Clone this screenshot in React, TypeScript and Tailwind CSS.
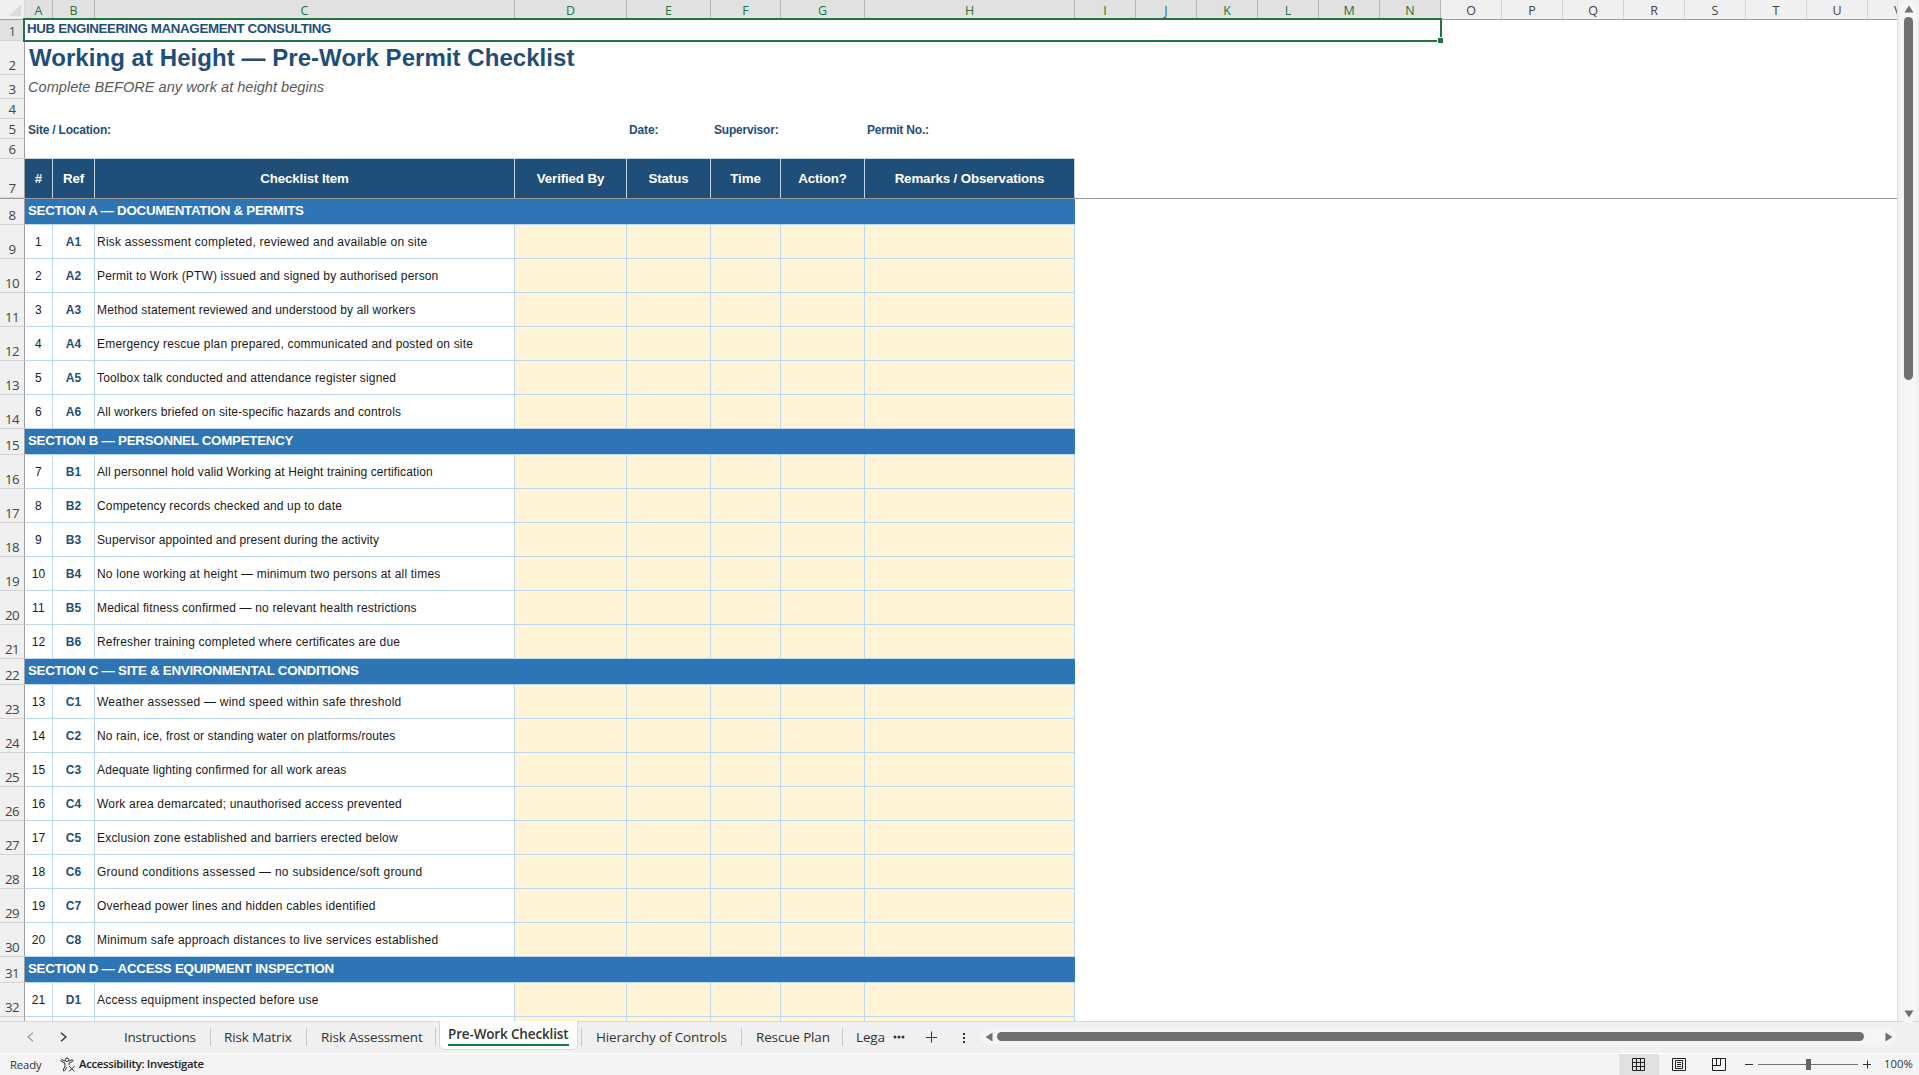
import { clsx } from 'clsx';

type Item = { row: number; n: number; ref: string; text: string; spacing: number };
type Section = { row: number; title: string; items: Item[] };

// each entry is the item text and its letter spacing in px
const makeSection = (
  row: number,
  first: number,
  letter: string,
  title: string,
  entries: [string, number][],
): Section => ({
  row,
  title: `SECTION ${letter} — ${title}`,
  items: entries.map(([text, spacing], i) => ({
    row: row + 1 + i,
    n: first + i,
    ref: `${letter}${i + 1}`,
    text,
    spacing,
  })),
});

const sections: Section[] = [
  makeSection(8, 1, 'A', 'DOCUMENTATION & PERMITS', [
    ['Risk assessment completed, reviewed and available on site', 0.24],
    ['Permit to Work (PTW) issued and signed by authorised person', 0.15],
    ['Method statement reviewed and understood by all workers', 0.14],
    ['Emergency rescue plan prepared, communicated and posted on site', 0.2],
    ['Toolbox talk conducted and attendance register signed', 0.17],
    ['All workers briefed on site-specific hazards and controls', 0.14],
  ]),
  makeSection(15, 7, 'B', 'PERSONNEL COMPETENCY', [
    ['All personnel hold valid Working at Height training certification', 0.11],
    ['Competency records checked and up to date', 0.15],
    ['Supervisor appointed and present during the activity', 0.1],
    ['No lone working at height — minimum two persons at all times', 0.2],
    ['Medical fitness confirmed — no relevant health restrictions', 0.15],
    ['Refresher training completed where certificates are due', 0.15],
  ]),
  makeSection(22, 13, 'C', 'SITE & ENVIRONMENTAL CONDITIONS', [
    ['Weather assessed — wind speed within safe threshold', 0.26],
    ['No rain, ice, frost or standing water on platforms/routes', 0.11],
    ['Adequate lighting confirmed for all work areas', 0.13],
    ['Work area demarcated; unauthorised access prevented', 0.19],
    ['Exclusion zone established and barriers erected below', 0.2],
    ['Ground conditions assessed — no subsidence/soft ground', 0.27],
    ['Overhead power lines and hidden cables identified', 0.2],
    ['Minimum safe approach distances to live services established', 0.22],
  ]),
  makeSection(31, 21, 'D', 'ACCESS EQUIPMENT INSPECTION', [['Access equipment inspected before use', 0.24]]),
];

const columns = [
  { name: 'A', width: 'w-[28px]' },
  { name: 'B', width: 'w-[42px]' },
  { name: 'C', width: 'w-[420px]' },
  { name: 'D', width: 'w-[112px]' },
  { name: 'E', width: 'w-[84px]' },
  { name: 'F', width: 'w-[70px]' },
  { name: 'G', width: 'w-[84px]' },
  { name: 'H', width: 'w-[210px]' },
  ...'IJKLMNOPQRSTU'.split('').map((name) => ({ name, width: 'w-[61px]' })),
];

const headings = [
  { label: '#', width: 'w-[28px]' },
  { label: 'Ref', width: 'w-[42px]' },
  { label: 'Checklist Item', width: 'w-[420px]' },
  { label: 'Verified By', width: 'w-[112px]' },
  { label: 'Status', width: 'w-[84px]' },
  { label: 'Time', width: 'w-[70px]' },
  { label: 'Action?', width: 'w-[84px]' },
  { label: 'Remarks / Observations', width: 'w-[210px]' },
];

const entryCells = ['w-[112px]', 'w-[84px]', 'w-[70px]', 'w-[84px]', 'w-[210px]'];

const RowNumber = ({ n, selected }: { n: number; selected?: boolean }) => (
  <div
    className={clsx(
      'flex w-[25px] shrink-0 items-end justify-center border-r border-b border-r-[#9f9f9f] border-b-[#d4d4d4] font-[Open_Sans,sans-serif] text-[13.3px] leading-[17px] font-normal tracking-[-0.6px]',
      selected ? 'bg-[#e1e1e1] text-[#217346]' : 'bg-[#f0f0f0] text-[#444]',
    )}
  >
    {n}
  </div>
);

const ColumnHeaders = () => (
  <div className="flex h-[20px] w-[1897px] overflow-hidden border-b border-[#9f9f9f] bg-[#f0f0f0] font-[Open_Sans,sans-serif] text-[12.5px]">
    <div className="flex w-[25px] shrink-0 items-end justify-end border-r border-[#dcdcdc] pr-[3px] pb-[3px]">
      <svg width="12" height="12" viewBox="0 0 12 12">
        <path d="M12 0v12H0z" fill="#dcdcdc" />
      </svg>
    </div>
    {columns.map((c, i) => (
      <div
        key={c.name}
        className={clsx(
          'h-[19px] shrink-0 border-r text-center leading-[21px]',
          c.width,
          i < 14 ? 'border-[#b5b5b5] bg-[#e1e1e1] text-[#217346]' : 'border-[#d4d4d4] text-[#444]',
        )}
      >
        {c.name}
      </div>
    ))}
    <div className="w-[61px] shrink-0 pl-[26px] leading-[21px] text-[#444]">V</div>
  </div>
);

const TitleRows = () => (
  <>
    <div className="flex h-[21px]">
      <RowNumber n={1} selected />
      <div className="pl-[2px] text-[13.33px] leading-[18px] font-bold tracking-[-0.36px] text-[#1f4e79]">
        HUB ENGINEERING MANAGEMENT CONSULTING
      </div>
      {/* selection frame over A1:N1 */}
      <div className="absolute top-[18px] left-[23px] h-[24px] w-[1419px] border-2 border-[#217346]">
        <div className="absolute -right-[3px] -bottom-[3px] h-[6px] w-[6px] border-t border-l border-white bg-[#217346]" />
      </div>
    </div>
    <div className="flex h-[34px]">
      <RowNumber n={2} />
      <div className="pl-[4px] text-[24px] leading-[33px] font-bold tracking-[0.05px] text-[#1f4e79]">
        Working at Height — Pre-Work Permit Checklist
      </div>
    </div>
    <div className="flex h-[24px]">
      <RowNumber n={3} />
      <div className="pl-[3px] text-[14.6px] leading-[25px] text-[#595959] italic">Complete BEFORE any work at height begins</div>
    </div>
    <div className="flex h-[20px]">
      <RowNumber n={4} />
    </div>
    <div className="flex h-[20px] text-[12px] leading-[22px] font-bold text-[#1f4e79]">
      <RowNumber n={5} />
      <div className="w-[602px] pl-[3px] tracking-[-0.2px]">Site / Location:</div>
      <div className="w-[84px] pl-[2px] tracking-[-0.15px]">Date:</div>
      <div className="w-[154px] pl-[3px] tracking-[-0.2px]">Supervisor:</div>
      <div className="pl-[2px] tracking-[-0.2px]">Permit No.:</div>
    </div>
    <div className="flex h-[20px]">
      <RowNumber n={6} />
      <div className="w-[1050px] border-b border-[#bdd7ee]" />
    </div>
  </>
);

const HeadingRow = () => (
  <div className="flex h-[40px] border-b border-[#999]">
    <RowNumber n={7} />
    {headings.map((h) => (
      <div
        key={h.label}
        className={clsx(
          'shrink-0 border-r border-[#bdd7ee] bg-[#1f4e79] text-center text-[13.33px] leading-[40px] font-bold tracking-[-0.13px] text-white',
          h.width,
        )}
      >
        {h.label}
      </div>
    ))}
  </div>
);

const ItemRow = ({ item }: { item: Item }) => (
  <div className="flex h-[34px] text-[12px] leading-[35px] text-[#1a1a1a]">
    <RowNumber n={item.row} />
    <div className="w-[28px] border-r border-b border-[#bdd7ee] text-center tracking-[0.2px]">{item.n}</div>
    <div className="w-[42px] border-r border-b border-[#bdd7ee] text-center font-bold text-[#1f4e79]">{item.ref}</div>
    <div className="w-[420px] border-r border-b border-[#bdd7ee] pl-[2px]" style={{ letterSpacing: item.spacing }}>
      {item.text}
    </div>
    {entryCells.map((width, i) => (
      <div key={i} className={clsx('border-r border-b border-[#bdd7ee] bg-[#fff5d6]', width)} />
    ))}
  </div>
);

const SectionRows = ({ section }: { section: Section }) => (
  <>
    <div className="flex h-[26px]">
      <RowNumber n={section.row} />
      <div className="w-[1050px] border-b border-[#bdd7ee] bg-[#2e75b6] pl-[3px] text-[13.33px] leading-[24px] font-bold tracking-[-0.27px] text-white">
        {section.title}
      </div>
    </div>
    {section.items.map((item) => (
      <ItemRow key={item.n} item={item} />
    ))}
  </>
);

const VerticalScrollbar = () => (
  <div className="flex w-[22px] flex-col items-center border-l border-[#e0e0e0] bg-[#f0f0f0]">
    <div className="relative flex h-[1023px] w-[17px] shrink-0 flex-col items-center rounded-full bg-[#f5f5f5]">
      <svg className="mt-[5px]" width="10" height="8" viewBox="0 0 10 8">
        <path d="M5 .5 9.5 7.5h-9z" fill="#707070" />
      </svg>
      <div className="mt-[4px] h-[363px] w-[9px] rounded-full bg-[#707070]" />
      <svg className="mt-auto mb-[5px]" width="10" height="8" viewBox="0 0 10 8">
        <path d="M5 7.5.5.5h9z" fill="#707070" />
      </svg>
    </div>
  </div>
);

const Divider = () => <div className="mt-[6px] h-[18px] w-px shrink-0 bg-[#c8c8c8]" />;

const SheetTabs = () => (
  <div className="flex h-[32px] bg-[#f0f0f0] font-[Open_Sans,sans-serif] text-[13.5px] leading-[31px] tracking-[-0.15px] whitespace-nowrap text-[#333]">
    <div className="flex w-[439px] shrink-0 border-t border-[#d8d8d8]">
      <svg className="mt-[10px] ml-[27px]" width="7" height="10" viewBox="0 0 7 10" fill="none" stroke="#a0a0a0" strokeWidth="1.3">
        <path d="M6 .7 1 5l5 4.3" />
      </svg>
      <svg className="mt-[10px] ml-[26px]" width="7" height="10" viewBox="0 0 7 10" fill="none" stroke="#333" strokeWidth="1.4">
        <path d="m1 .7 5 4.3-5 4.3" />
      </svg>
      <div className="ml-[43px] w-[100px] pl-[14px] tracking-[-0.25px]">Instructions</div>
      <Divider />
      <div className="w-[95px] pl-[13px]">Risk Matrix</div>
      <Divider />
      <div className="w-[128px] pl-[14px]">Risk Assessment</div>
      <Divider />
    </div>
    <div className="h-[29px] w-[139px] shrink-0 rounded-b-[5px] border-x border-b border-[#d8d8d8] bg-white px-[8px] pt-[2px] font-semibold">
      <div className="h-[23px] border-b-2 border-[#107c41] leading-[23px]">Pre-Work Checklist</div>
    </div>
    <div className="flex flex-1 border-t border-[#d8d8d8]">
      <div className="w-[3px] shrink-0" />
      <Divider />
      <div className="w-[159px] shrink-0 pl-[14px]">Hierarchy of Controls</div>
      <Divider />
      <div className="w-[100px] shrink-0 pl-[14px]">Rescue Plan</div>
      <Divider />
      <div className="w-[49px] shrink-0 pl-[13px]">Lega</div>
      <svg className="mt-[13px] ml-px shrink-0" width="12" height="4" viewBox="0 0 12 4" fill="#333">
        <circle cx="2" cy="2" r="1.5" />
        <circle cx="6" cy="2" r="1.5" />
        <circle cx="10" cy="2" r="1.5" />
      </svg>
      <svg className="mt-[9px] ml-[20px] shrink-0" width="12" height="12" viewBox="0 0 12 12" stroke="#333">
        <path d="M6.5 .5v11M1 6.500h11" />
      </svg>
      <svg className="mt-[11px] ml-[26px] shrink-0" width="2" height="10" viewBox="0 0 2 10" fill="#333">
        <path d="M0 0h2v2H0zM0 4h2v2H0zM0 8h2v2H0z" />
      </svg>
      <div className="mt-[6px] ml-[15px] flex h-[17px] w-[916px] shrink-0 items-center rounded-full bg-[#f5f5f5]">
        <svg className="ml-[5px]" width="8" height="10" viewBox="0 0 8 10">
          <path d="M.5 5 7.5.5v9z" fill="#707070" />
        </svg>
        <div className="ml-[4px] h-[9px] w-[867px] rounded-full bg-[#707070]" />
        <svg className="ml-[21px]" width="8" height="10" viewBox="0 0 8 10">
          <path d="M7.500 5 .5.5v9z" fill="#707070" />
        </svg>
      </div>
    </div>
  </div>
);

const StatusBar = () => (
  <div className="flex h-[22px] items-center border-t border-white bg-[#f4f4f4] font-[Open_Sans,sans-serif] text-[11.3px] whitespace-nowrap text-[#333]">
    <div className="w-[60px] pt-px pl-[10px] tracking-[-0.1px]">Ready</div>
    <svg width="16" height="16" viewBox="0 0 16 16" fill="none" stroke="#333">
      <circle cx="7" cy="2.800" r="1.800" />
      <path d="M5 4 2 2.800C.8 2.500.5 4 1.500 4.500L5 6v3l-1.700 4c-.3 1.200 1 1.600 1.500.6L7 10M9 4l3-1.200c1.200-.3 1.500 1.200.5 1.700L9 6v2M9 9l5.500 5.500M14.500 9 9 14.500" />
    </svg>
    <div className="ml-[3px] font-semibold tracking-[-0.3px] text-[#222]">Accessibility: Investigate</div>
    <div className="ml-auto flex h-full w-[40px] shrink-0 items-center bg-[#e1e1e1] pl-[13px]">
      <svg width="13" height="13" viewBox="0 0 13 13" fill="none" stroke="#222">
        <path d="M.5.5h12v12H.5zM4.500.5v12M8.500.5v12M.5 4.500h12M.5 8.500h12" />
      </svg>
    </div>
    <div className="flex w-[40px] shrink-0 pl-[13px]">
      <svg width="14" height="13" viewBox="0 0 14 13" fill="none" stroke="#222">
        <path d="M.5.5h13v12H.5zM3.500 2.500h7v8h-7zM5 4.500h4M5 6.500h4M5 8.500h4" />
      </svg>
    </div>
    <div className="flex w-[40px] shrink-0 pl-[13px]">
      <svg width="14" height="13" viewBox="0 0 14 13" fill="none" stroke="#222">
        <path d="M.5.5h13v12H.5zM.5 7.500h8v-7M4.500.5v7" />
      </svg>
    </div>
    <div className="ml-[6px] h-px w-[8px] shrink-0 bg-[#333]" />
    <div className="ml-[5px] flex h-[11px] w-[100px] shrink-0 items-center justify-center bg-[linear-gradient(#707070,#707070)] bg-[length:100%_1px] bg-center bg-no-repeat">
      <div className="h-[11px] w-[5px] bg-[#666]" />
    </div>
    <svg className="ml-[5px] shrink-0" width="8" height="9" viewBox="0 0 8 9" stroke="#333">
      <path d="M4.500 .5v8M0 4.500h8" />
    </svg>
    <div className="w-[48px] shrink-0 pl-[13px]">100%</div>
  </div>
);

const App = () => {
  return (
    <div className="h-[1075px] w-[1919px] overflow-hidden bg-[#f0f0f0]">
      <div className="flex h-[1021px]">
        <div className="relative h-[1021px] w-[1897px] overflow-hidden bg-white font-[Liberation_Sans,Arial,sans-serif] whitespace-nowrap">
          <ColumnHeaders />
          <TitleRows />
          <HeadingRow />
          {sections.map((section) => (
            <SectionRows key={section.title} section={section} />
          ))}
          {/* top edge of the next row, the rest is scrolled out of view */}
          <div className="flex h-[34px]">
            <div className="w-[25px] border-r border-[#9f9f9f] bg-[#f0f0f0]" />
            <div className="w-[28px] border-r border-[#bdd7ee]" />
            <div className="w-[42px] border-r border-[#bdd7ee]" />
            <div className="w-[420px] border-r border-[#bdd7ee]" />
            {entryCells.map((width, i) => (
              <div key={i} className={clsx('border-r border-[#bdd7ee] bg-[#fff5d6]', width)} />
            ))}
          </div>
        </div>
        <VerticalScrollbar />
      </div>
      <SheetTabs />
      <StatusBar />
    </div>
  );
};

export default App;
